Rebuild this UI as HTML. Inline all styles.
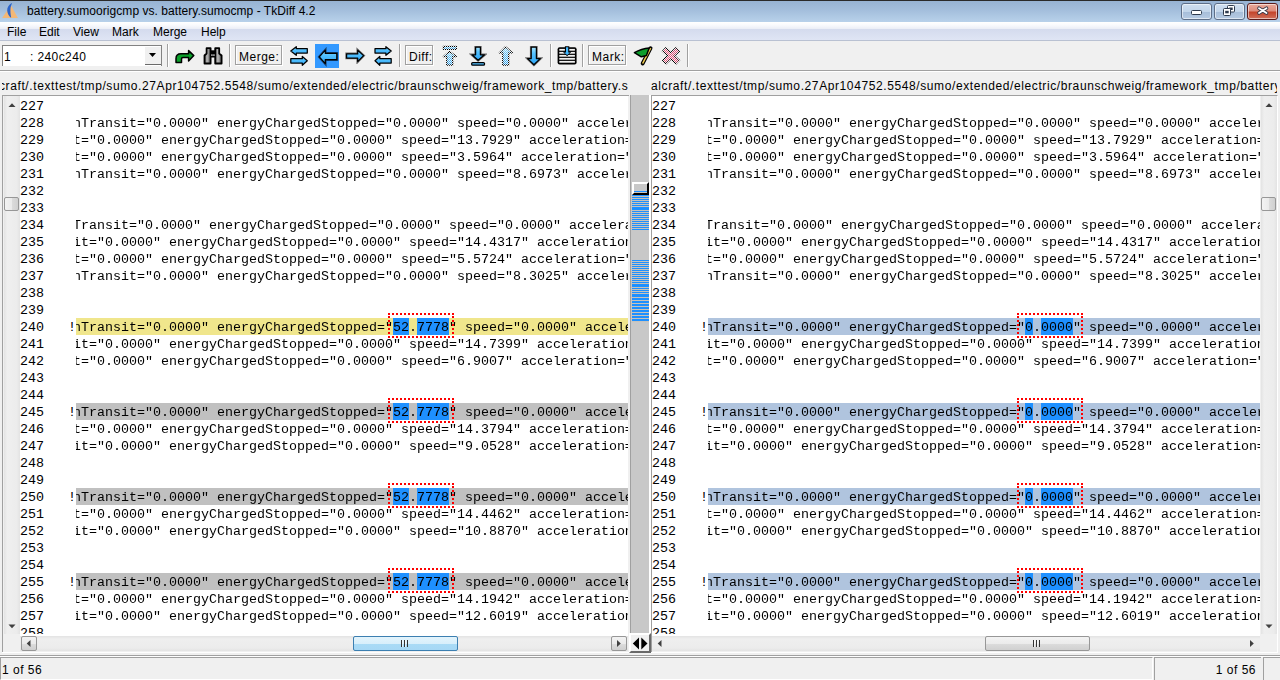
<!DOCTYPE html><html><head><meta charset="utf-8"><style>*{margin:0;padding:0;box-sizing:border-box}
html,body{width:1280px;height:680px;overflow:hidden}
body{position:relative;background:#f0f0f0;font-family:"Liberation Sans",sans-serif;font-size:12px;color:#000}
.a{position:absolute}
#title{left:0;top:0;width:1280px;height:22px;background:linear-gradient(#97b3d3,#a2bddb 40%,#b8d1ea);border-top:1px solid #2a2a2a}
#title .tt{left:27px;top:3px;line-height:14px;white-space:pre;color:#000;letter-spacing:0.05px}
.wb{top:2px;height:16.5px;width:31px;border:1px solid #5d6e87;border-radius:3px;background:linear-gradient(#cfdff0 0,#c2d5ea 50%,#a6bdd8 51%,#b6cbe3 100%);box-shadow:inset 0 0 0 1px rgba(255,255,255,.55)}
#menu{left:0;top:22px;width:1280px;height:19px;background:linear-gradient(#ffffff 0,#f9fafd 3px,#eceff7 6.5px,#d4dbee 7px,#dfe5f4 18px);border-bottom:1px solid #b9c1d2}
#menu span{position:absolute;top:3px;line-height:14px}
#tb{left:0;top:41px;width:1280px;height:30px;background:#f0f0f0;border-bottom:1px solid #a0a0a0}
.sep{top:3px;width:2px;height:23px;border-left:1px solid #a0a0a0;border-right:1px solid #fff}
.lbl{top:4px;height:20px;border:1px solid #a0a0a0;box-shadow:inset 1px 1px 0 #fff,1px 1px 0 #fff;line-height:14px;padding:4px 0 0 3px;white-space:pre;letter-spacing:0.5px}
.path{top:79px;line-height:14px;white-space:pre;overflow:hidden;height:16px;font-size:12px;letter-spacing:0.6px}
.pane{top:95px;height:557px;border-top:1px solid #a0a0a0;border-left:1px solid #a0a0a0}
.ta{top:96px;width:608px;height:540px;background:#fff;overflow:hidden}
.clip{position:absolute;left:0;top:0;width:608px;height:538px;overflow:hidden}
.row .t{font-family:"Liberation Mono",monospace;font-size:13.333px;line-height:17px;white-space:pre}
.numw{position:absolute;left:0;top:1px;width:56px;height:537px}
.row .n{left:0}
.row .cb{left:48px}
.txt{position:absolute;left:56px;top:1px;width:552px;height:537px;overflow:hidden}
.row{position:absolute;left:0;width:552px;height:17px}
.txt .row .t{left:-3px}
.row .t{position:absolute;top:1px}
.txt .row .t{transform:scaleY(.9);transform-origin:0 12.5px}
.hl-y{background:#f0e68c}.hl-g{background:#c0c0c0}.hl-b{background:#b0c4de}
.row i{position:absolute;top:0;height:17px;background:#1e90ff}
.rbox{position:absolute;height:25px;border:2px dotted #f00}
.vs{width:16px;height:538px;top:96px;background:linear-gradient(90deg,#e3e3e3,#efefef 20%,#ececec 80%,#e3e3e3)}
.hs{height:15px;top:636px;width:608px;background:linear-gradient(#e3e3e3,#efefef 20%,#ececec 80%,#e3e3e3)}
.thumbv{width:15px;height:14px;border:1px solid #979797;border-radius:2px;background:linear-gradient(90deg,#f3f3f3 0,#ebebeb 50%,#dcdcdc 51%,#d0d0d0 100%)}
.thumbh{height:15px;border:1px solid #979797;border-radius:2px;background:linear-gradient(#f3f3f3 0,#ebebeb 50%,#dcdcdc 51%,#d0d0d0 100%)}
.thumbh.hot{border-color:#3c7fb1;background:linear-gradient(#e3f4fc 0,#d8effb 50%,#a9dbf6 51%,#a6d8f5 100%)}
.btnh{width:16px;height:15px;border:1px solid #979797;border-radius:2px;background:linear-gradient(#f2f2f2 0,#ebebeb 50%,#dddddd 51%,#cfcfcf 100%)}
#map{left:630px;top:95px;width:21px;height:538px;border-left:1px solid #a0a0a0;border-right:2px solid #fff;background:#c8c8c8}
#status{left:0;top:657px;width:1280px;height:23px}
.grip{width:7px;height:7px;background:repeating-linear-gradient(90deg,#333 0,#333 1px,rgba(255,255,255,.6) 1px,rgba(255,255,255,.6) 2px,transparent 2px,transparent 3px)}
</style></head><body><div id="title" class="a">
 <svg class="a" style="left:0;top:0" width="22" height="22" viewBox="0 0 22 22"><path d="M2.1,16.9 L10.8,4 L17.9,16.9 Z" fill="#f3b877"/><path d="M11.6,2 C9,3.5 7,6.5 7.2,9.5 C7.3,12 8.5,14.5 10.6,16.6 L11.2,16.6 C10.4,13 10.2,9 10.6,6.5 C10.9,4.8 11.5,3.5 11.9,2.6 Z" fill="#2b63c9"/></svg>
 <div class="a tt">battery.sumoorigcmp vs. battery.sumocmp - TkDiff 4.2</div>
 <div class="a wb" style="left:1181px"></div>
 <div class="a wb" style="left:1214px"></div>
 <div class="a wb" style="left:1247px;border-color:#5a1b1b;background:linear-gradient(#e9a99a 0,#dd8d7d 45%,#c4452c 55%,#d0715c 100%)"></div>
</div>
<div id="menu" class="a"><span style="left:7px">File</span><span style="left:39px">Edit</span><span style="left:73px">View</span><span style="left:112px">Mark</span><span style="left:153px">Merge</span><span style="left:201px">Help</span></div>
<div id="tb" class="a">
 <div class="a" style="left:2px;top:4px;width:160px;height:21px;background:#fff;border-top:1px solid #828282;border-left:1px solid #828282;border-right:1px solid #828282"></div>
 <div class="a" style="left:145px;top:6px;width:16px;height:18px;background:#f0f0f0;border-bottom:1px solid #6a6a6a"></div>
 <div class="a" style="left:4px;top:9px;line-height:14px;white-space:pre">1</div><div class="a" style="left:30px;top:9px;line-height:14px;white-space:pre;letter-spacing:0.4px">: 240c240</div>
 <div class="a sep" style="left:167px"></div>
 <div class="a sep" style="left:229px"></div>
 <div class="a lbl" style="left:235px;width:47px">Merge:</div>
 <div class="a" style="left:315px;top:3px;width:24px;height:24px;background:#3399ff"></div>
 <div class="a sep" style="left:399px"></div>
 <div class="a lbl" style="left:405px;width:28px">Diff:</div>
 <div class="a sep" style="left:550px"></div>
 <div class="a sep" style="left:582px"></div>
 <div class="a lbl" style="left:588px;width:38px">Mark:</div>
 <div class="a sep" style="left:687px"></div>
</div>
<div class="a" style="left:0;top:71px;width:1280px;height:1px;background:#fff"></div>
<div class="a path" style="left:2px;width:626px"><span style="position:absolute;left:-3px">craft/.texttest/tmp/sumo.27Apr104752.5548/sumo/extended/electric/braunschweig/framework_tmp/battery.sumoorigcmp</span></div>
<div class="a path" style="left:651px;width:626px"><span style="position:absolute;left:0">alcraft/.texttest/tmp/sumo.27Apr104752.5548/sumo/extended/electric/braunschweig/framework_tmp/battery.sumocmp</span></div>

<div class="a pane" style="left:2px;width:627px"></div>
<div class="a vs" style="left:4px"></div>
<div class="a thumbv" style="left:4px;top:197px"></div>
<div class="a ta" style="left:20px"><div class="clip"><div class="numw"><div class="row" style="top:0px"><span class="t n">227</span></div><div class="row" style="top:17px"><span class="t n">228</span></div><div class="row" style="top:34px"><span class="t n">229</span></div><div class="row" style="top:51px"><span class="t n">230</span></div><div class="row" style="top:68px"><span class="t n">231</span></div><div class="row" style="top:85px"><span class="t n">232</span></div><div class="row" style="top:102px"><span class="t n">233</span></div><div class="row" style="top:119px"><span class="t n">234</span></div><div class="row" style="top:136px"><span class="t n">235</span></div><div class="row" style="top:153px"><span class="t n">236</span></div><div class="row" style="top:170px"><span class="t n">237</span></div><div class="row" style="top:187px"><span class="t n">238</span></div><div class="row" style="top:204px"><span class="t n">239</span></div><div class="row" style="top:221px"><span class="t n">240</span><span class="t cb">!</span></div><div class="row" style="top:238px"><span class="t n">241</span></div><div class="row" style="top:255px"><span class="t n">242</span></div><div class="row" style="top:272px"><span class="t n">243</span></div><div class="row" style="top:289px"><span class="t n">244</span></div><div class="row" style="top:306px"><span class="t n">245</span><span class="t cb">!</span></div><div class="row" style="top:323px"><span class="t n">246</span></div><div class="row" style="top:340px"><span class="t n">247</span></div><div class="row" style="top:357px"><span class="t n">248</span></div><div class="row" style="top:374px"><span class="t n">249</span></div><div class="row" style="top:391px"><span class="t n">250</span><span class="t cb">!</span></div><div class="row" style="top:408px"><span class="t n">251</span></div><div class="row" style="top:425px"><span class="t n">252</span></div><div class="row" style="top:442px"><span class="t n">253</span></div><div class="row" style="top:459px"><span class="t n">254</span></div><div class="row" style="top:476px"><span class="t n">255</span><span class="t cb">!</span></div><div class="row" style="top:493px"><span class="t n">256</span></div><div class="row" style="top:510px"><span class="t n">257</span></div><div class="row" style="top:527px"><span class="t n">258</span></div></div><div class="txt"><div class="row" style="top:17px"><span class="t">nTransit=&quot;0.0000&quot; energyChargedStopped=&quot;0.0000&quot; speed=&quot;0.0000&quot; acceleration=&quot;0.0000&quot;</span></div><div class="row" style="top:34px"><span class="t">t=&quot;0.0000&quot; energyChargedStopped=&quot;0.0000&quot; speed=&quot;13.7929&quot; acceleration=&quot;0.0000&quot;</span></div><div class="row" style="top:51px"><span class="t">t=&quot;0.0000&quot; energyChargedStopped=&quot;0.0000&quot; speed=&quot;3.5964&quot; acceleration=&quot;0.0000&quot;</span></div><div class="row" style="top:68px"><span class="t">nTransit=&quot;0.0000&quot; energyChargedStopped=&quot;0.0000&quot; speed=&quot;8.6973&quot; acceleration=&quot;0.0000&quot;</span></div><div class="row" style="top:119px"><span class="t">Transit=&quot;0.0000&quot; energyChargedStopped=&quot;0.0000&quot; speed=&quot;0.0000&quot; acceleration=&quot;0.0000&quot;</span></div><div class="row" style="top:136px"><span class="t">it=&quot;0.0000&quot; energyChargedStopped=&quot;0.0000&quot; speed=&quot;14.4317&quot; acceleration=&quot;0.0000&quot;</span></div><div class="row" style="top:153px"><span class="t">t=&quot;0.0000&quot; energyChargedStopped=&quot;0.0000&quot; speed=&quot;5.5724&quot; acceleration=&quot;0.0000&quot;</span></div><div class="row" style="top:170px"><span class="t">nTransit=&quot;0.0000&quot; energyChargedStopped=&quot;0.0000&quot; speed=&quot;8.3025&quot; acceleration=&quot;0.0000&quot;</span></div><div class="row hl-y" style="top:221px"><i style="left:317px;width:16px"></i><i style="left:341px;width:32px"></i><span class="t">nTransit="0.0000" energyChargedStopped="52.7778" speed="0.0000" acceleration="0.0000"</span></div><div class="rbox" style="top:216px;left:312px;width:66px"></div><div class="row" style="top:238px"><span class="t">it=&quot;0.0000&quot; energyChargedStopped=&quot;0.0000&quot; speed=&quot;14.7399&quot; acceleration=&quot;0.0000&quot;</span></div><div class="row" style="top:255px"><span class="t">t=&quot;0.0000&quot; energyChargedStopped=&quot;0.0000&quot; speed=&quot;6.9007&quot; acceleration=&quot;0.0000&quot;</span></div><div class="row hl-g" style="top:306px"><i style="left:317px;width:16px"></i><i style="left:341px;width:32px"></i><span class="t">nTransit="0.0000" energyChargedStopped="52.7778" speed="0.0000" acceleration="0.0000"</span></div><div class="rbox" style="top:301px;left:312px;width:66px"></div><div class="row" style="top:323px"><span class="t">t=&quot;0.0000&quot; energyChargedStopped=&quot;0.0000&quot; speed=&quot;14.3794&quot; acceleration=&quot;0.0000&quot;</span></div><div class="row" style="top:340px"><span class="t">it=&quot;0.0000&quot; energyChargedStopped=&quot;0.0000&quot; speed=&quot;9.0528&quot; acceleration=&quot;0.0000&quot;</span></div><div class="row hl-g" style="top:391px"><i style="left:317px;width:16px"></i><i style="left:341px;width:32px"></i><span class="t">nTransit="0.0000" energyChargedStopped="52.7778" speed="0.0000" acceleration="0.0000"</span></div><div class="rbox" style="top:386px;left:312px;width:66px"></div><div class="row" style="top:408px"><span class="t">t=&quot;0.0000&quot; energyChargedStopped=&quot;0.0000&quot; speed=&quot;14.4462&quot; acceleration=&quot;0.0000&quot;</span></div><div class="row" style="top:425px"><span class="t">it=&quot;0.0000&quot; energyChargedStopped=&quot;0.0000&quot; speed=&quot;10.8870&quot; acceleration=&quot;0.0000&quot;</span></div><div class="row hl-g" style="top:476px"><i style="left:317px;width:16px"></i><i style="left:341px;width:32px"></i><span class="t">nTransit="0.0000" energyChargedStopped="52.7778" speed="0.0000" acceleration="0.0000"</span></div><div class="rbox" style="top:471px;left:312px;width:66px"></div><div class="row" style="top:493px"><span class="t">t=&quot;0.0000&quot; energyChargedStopped=&quot;0.0000&quot; speed=&quot;14.1942&quot; acceleration=&quot;0.0000&quot;</span></div><div class="row" style="top:510px"><span class="t">it=&quot;0.0000&quot; energyChargedStopped=&quot;0.0000&quot; speed=&quot;12.6019&quot; acceleration=&quot;0.0000&quot;</span></div></div></div></div>
<div class="a hs" style="left:20px"></div>
<div class="a btnh" style="left:21px;top:636px"></div>
<div class="a btnh" style="left:611px;top:636px"></div>
<div class="a thumbh hot" style="left:353px;top:636px;width:105px"></div>
<div class="a grip" style="left:401px;top:640px"></div>

<div id="map" class="a"></div>
<div class="a" style="left:632px;top:191px;width:17px;height:39px;background:repeating-linear-gradient(#1e90ff 0,#1e90ff 1px,#c9c3ba 1px,#c9c3ba 2px)"></div>
<div class="a" style="left:632px;top:207px;width:17px;height:2px;background:#1e90ff"></div>
<div class="a" style="left:632px;top:260px;width:17px;height:35px;background:repeating-linear-gradient(#1e90ff 0,#1e90ff 1px,#c9c3ba 1px,#c9c3ba 2px)"></div>
<div class="a" style="left:632px;top:284px;width:17px;height:2px;background:#1e90ff"></div>
<div class="a" style="left:632px;top:295px;width:17px;height:27px;background:repeating-linear-gradient(#1e90ff 0,#1e90ff 2px,#c9c3ba 2px,#c9c3ba 3px)"></div>
<div class="a" style="left:632px;top:182px;width:17px;height:13px;border-top:2px solid #fff;border-left:2px solid #fff;border-right:2px solid #000;border-bottom:2px solid #000"></div>

<div class="a pane" style="left:651px;width:627px;border-right:1px solid #fff"></div>
<div class="a ta" style="left:652px"><div class="clip"><div class="numw"><div class="row" style="top:0px"><span class="t n">227</span></div><div class="row" style="top:17px"><span class="t n">228</span></div><div class="row" style="top:34px"><span class="t n">229</span></div><div class="row" style="top:51px"><span class="t n">230</span></div><div class="row" style="top:68px"><span class="t n">231</span></div><div class="row" style="top:85px"><span class="t n">232</span></div><div class="row" style="top:102px"><span class="t n">233</span></div><div class="row" style="top:119px"><span class="t n">234</span></div><div class="row" style="top:136px"><span class="t n">235</span></div><div class="row" style="top:153px"><span class="t n">236</span></div><div class="row" style="top:170px"><span class="t n">237</span></div><div class="row" style="top:187px"><span class="t n">238</span></div><div class="row" style="top:204px"><span class="t n">239</span></div><div class="row" style="top:221px"><span class="t n">240</span><span class="t cb">!</span></div><div class="row" style="top:238px"><span class="t n">241</span></div><div class="row" style="top:255px"><span class="t n">242</span></div><div class="row" style="top:272px"><span class="t n">243</span></div><div class="row" style="top:289px"><span class="t n">244</span></div><div class="row" style="top:306px"><span class="t n">245</span><span class="t cb">!</span></div><div class="row" style="top:323px"><span class="t n">246</span></div><div class="row" style="top:340px"><span class="t n">247</span></div><div class="row" style="top:357px"><span class="t n">248</span></div><div class="row" style="top:374px"><span class="t n">249</span></div><div class="row" style="top:391px"><span class="t n">250</span><span class="t cb">!</span></div><div class="row" style="top:408px"><span class="t n">251</span></div><div class="row" style="top:425px"><span class="t n">252</span></div><div class="row" style="top:442px"><span class="t n">253</span></div><div class="row" style="top:459px"><span class="t n">254</span></div><div class="row" style="top:476px"><span class="t n">255</span><span class="t cb">!</span></div><div class="row" style="top:493px"><span class="t n">256</span></div><div class="row" style="top:510px"><span class="t n">257</span></div><div class="row" style="top:527px"><span class="t n">258</span></div></div><div class="txt"><div class="row" style="top:17px"><span class="t">nTransit=&quot;0.0000&quot; energyChargedStopped=&quot;0.0000&quot; speed=&quot;0.0000&quot; acceleration=&quot;0.0000&quot;</span></div><div class="row" style="top:34px"><span class="t">t=&quot;0.0000&quot; energyChargedStopped=&quot;0.0000&quot; speed=&quot;13.7929&quot; acceleration=&quot;0.0000&quot;</span></div><div class="row" style="top:51px"><span class="t">t=&quot;0.0000&quot; energyChargedStopped=&quot;0.0000&quot; speed=&quot;3.5964&quot; acceleration=&quot;0.0000&quot;</span></div><div class="row" style="top:68px"><span class="t">nTransit=&quot;0.0000&quot; energyChargedStopped=&quot;0.0000&quot; speed=&quot;8.6973&quot; acceleration=&quot;0.0000&quot;</span></div><div class="row" style="top:119px"><span class="t">Transit=&quot;0.0000&quot; energyChargedStopped=&quot;0.0000&quot; speed=&quot;0.0000&quot; acceleration=&quot;0.0000&quot;</span></div><div class="row" style="top:136px"><span class="t">it=&quot;0.0000&quot; energyChargedStopped=&quot;0.0000&quot; speed=&quot;14.4317&quot; acceleration=&quot;0.0000&quot;</span></div><div class="row" style="top:153px"><span class="t">t=&quot;0.0000&quot; energyChargedStopped=&quot;0.0000&quot; speed=&quot;5.5724&quot; acceleration=&quot;0.0000&quot;</span></div><div class="row" style="top:170px"><span class="t">nTransit=&quot;0.0000&quot; energyChargedStopped=&quot;0.0000&quot; speed=&quot;8.3025&quot; acceleration=&quot;0.0000&quot;</span></div><div class="row hl-b" style="top:221px"><i style="left:317px;width:8px"></i><i style="left:333px;width:32px"></i><span class="t">nTransit="0.0000" energyChargedStopped="0.0000" speed="0.0000" acceleration="0.0000"</span></div><div class="rbox" style="top:216px;left:309px;width:66px"></div><div class="row" style="top:238px"><span class="t">it=&quot;0.0000&quot; energyChargedStopped=&quot;0.0000&quot; speed=&quot;14.7399&quot; acceleration=&quot;0.0000&quot;</span></div><div class="row" style="top:255px"><span class="t">t=&quot;0.0000&quot; energyChargedStopped=&quot;0.0000&quot; speed=&quot;6.9007&quot; acceleration=&quot;0.0000&quot;</span></div><div class="row hl-b" style="top:306px"><i style="left:317px;width:8px"></i><i style="left:333px;width:32px"></i><span class="t">nTransit="0.0000" energyChargedStopped="0.0000" speed="0.0000" acceleration="0.0000"</span></div><div class="rbox" style="top:301px;left:309px;width:66px"></div><div class="row" style="top:323px"><span class="t">t=&quot;0.0000&quot; energyChargedStopped=&quot;0.0000&quot; speed=&quot;14.3794&quot; acceleration=&quot;0.0000&quot;</span></div><div class="row" style="top:340px"><span class="t">it=&quot;0.0000&quot; energyChargedStopped=&quot;0.0000&quot; speed=&quot;9.0528&quot; acceleration=&quot;0.0000&quot;</span></div><div class="row hl-b" style="top:391px"><i style="left:317px;width:8px"></i><i style="left:333px;width:32px"></i><span class="t">nTransit="0.0000" energyChargedStopped="0.0000" speed="0.0000" acceleration="0.0000"</span></div><div class="rbox" style="top:386px;left:309px;width:66px"></div><div class="row" style="top:408px"><span class="t">t=&quot;0.0000&quot; energyChargedStopped=&quot;0.0000&quot; speed=&quot;14.4462&quot; acceleration=&quot;0.0000&quot;</span></div><div class="row" style="top:425px"><span class="t">it=&quot;0.0000&quot; energyChargedStopped=&quot;0.0000&quot; speed=&quot;10.8870&quot; acceleration=&quot;0.0000&quot;</span></div><div class="row hl-b" style="top:476px"><i style="left:317px;width:8px"></i><i style="left:333px;width:32px"></i><span class="t">nTransit="0.0000" energyChargedStopped="0.0000" speed="0.0000" acceleration="0.0000"</span></div><div class="rbox" style="top:471px;left:309px;width:66px"></div><div class="row" style="top:493px"><span class="t">t=&quot;0.0000&quot; energyChargedStopped=&quot;0.0000&quot; speed=&quot;14.1942&quot; acceleration=&quot;0.0000&quot;</span></div><div class="row" style="top:510px"><span class="t">it=&quot;0.0000&quot; energyChargedStopped=&quot;0.0000&quot; speed=&quot;12.6019&quot; acceleration=&quot;0.0000&quot;</span></div></div></div></div>
<div class="a vs" style="left:1261px"></div>
<div class="a thumbv" style="left:1261px;top:197px"></div>
<div class="a hs" style="left:652px"></div>
<div class="a thumbh" style="left:985px;top:636px;width:105px"></div>
<div class="a grip" style="left:1033px;top:640px"></div>

<div class="a" style="left:2px;top:652px;width:1276px;height:1px;background:#fff"></div>
<div class="a" style="left:0;top:655px;width:1280px;height:1px;background:#a0a0a0"></div>
<div class="a" style="left:0;top:656px;width:1280px;height:1px;background:#fff"></div>
<div class="a" style="left:0;top:657px;width:1153px;height:23px;border-top:1px solid #a0a0a0;border-left:1px solid #a0a0a0;border-right:1px solid #fff;border-bottom:1px solid #fff"></div>
<div class="a" style="left:2px;top:663px;line-height:14px;letter-spacing:0.5px">1 of 56</div>
<div class="a" style="left:1154px;top:657px;width:107px;height:23px;border-top:1px solid #a0a0a0;border-left:1px solid #a0a0a0"></div>
<div class="a" style="left:1154px;top:663px;width:102px;line-height:14px;text-align:right;letter-spacing:0.5px">1 of 56</div>
<div class="a" style="left:1263px;top:657px;width:17px;height:23px;border-top:1px solid #a0a0a0;border-left:1px solid #a0a0a0"></div>
<div class="a" style="left:629px;top:633px;width:22px;height:20px;border-top:2px solid #fff;border-left:2px solid #fff;border-right:2px solid #696969;border-bottom:2px solid #696969;background:#f0f0f0"></div>
<svg class="a" style="left:0;top:0" width="1280" height="680" viewBox="0 0 1280 680"><defs>
<linearGradient id="gb" x1="0" y1="0" x2="0" y2="1"><stop offset="0" stop-color="#a8e6ff"/><stop offset=".35" stop-color="#55c2ff"/><stop offset="1" stop-color="#2aa4f6"/></linearGradient>
<linearGradient id="gg" x1="0" y1="0" x2="1" y2="0"><stop offset="0" stop-color="#444"/><stop offset=".4" stop-color="#bdbdbd"/><stop offset="1" stop-color="#555"/></linearGradient>
<filter id="blur" x="-20%" y="-20%" width="140%" height="140%"><feGaussianBlur stdDeviation="0.7"/></filter>
<pattern id="chk" width="2" height="2" patternUnits="userSpaceOnUse"><rect width="1" height="1" fill="#fff"/><rect x="1" y="1" width="1" height="1" fill="#fff"/></pattern>
<mask id="mchk" maskUnits="userSpaceOnUse" x="0" y="0" width="1280" height="680"><rect width="1280" height="680" fill="url(#chk)"/></mask>
</defs><path d="M176,62.5 L176,58.5 C176,55.3 178,53.7 181,53.7 L188.6,53.7 L188.6,50.6 L193.8,55.6 L188.6,61 L188.6,57.5 L183,57.5 C182,57.5 181.5,58.2 181.5,59 L181.5,62.5 Z" fill="#0aa02a" stroke="#000" stroke-width="1.5" stroke-linejoin="round"/><g stroke="#000" stroke-width="1.8" fill="url(#gg)" stroke-linejoin="round"><path d="M206.6,48.2 L210.6,48.2 L210.6,63.5 L204.5,63.5 L204.5,55.5 L206.6,53.5 Z"/><path d="M215.2,48.2 L219.2,48.2 L219.2,53.5 L221.6,55.5 L221.6,63.5 L215.2,63.5 Z"/></g><rect x="210.6" y="50.3" width="4.6" height="7.2" fill="#000"/><rect x="211.4" y="54.3" width="1.1" height="1.6" fill="#fff"/><rect x="213.4" y="54.3" width="1.1" height="1.6" fill="#fff"/><path d="M290.8,51 L296.3,46.7 L296.3,48.7 L307.3,48.7 L307.3,53.1 L296.3,53.1 L296.3,55.3 Z" fill="url(#gb)" stroke="#000" stroke-width="1.25" stroke-linejoin="round"/><path d="M307.3,60.8 L302.3,56.5 L302.3,58.7 L290.8,58.7 L290.8,63.1 L302.3,63.1 L302.3,65.3 Z" fill="url(#gb)" stroke="#000" stroke-width="1.25" stroke-linejoin="round"/><path d="M319.3,56.9 L325.3,50.2 L325.3,53.4 L336.8,53.4 L336.8,59.6 L325.3,59.6 L325.3,63.6 Z" fill="none" stroke="#000" stroke-opacity=".55" stroke-width="2.6" stroke-linejoin="miter" filter="url(#blur)"/><path d="M319.3,56.9 L325.3,50.2 L325.3,53.4 L336.8,53.4 L336.8,59.6 L325.3,59.6 L325.3,63.6 Z" fill="url(#gb)" stroke="#000" stroke-width="1.25" stroke-linejoin="round"/><path d="M363.6,55.6 L357.7,50.2 L357.7,53.9 L346.6,53.9 L346.6,58 L357.7,58 L357.7,61.6 Z" fill="none" stroke="#000" stroke-opacity=".55" stroke-width="2.6" stroke-linejoin="miter" filter="url(#blur)"/><path d="M363.6,55.6 L357.7,50.2 L357.7,53.9 L346.6,53.9 L346.6,58 L357.7,58 L357.7,61.6 Z" fill="url(#gb)" stroke="#000" stroke-width="1.25" stroke-linejoin="round"/><path d="M391.2,51 L385.9,46.7 L385.9,48.7 L375,48.7 L375,53.1 L385.9,53.1 L385.9,55.3 Z" fill="url(#gb)" stroke="#000" stroke-width="1.25" stroke-linejoin="round"/><path d="M375,60.8 L379.8,56.5 L379.8,58.7 L391.2,58.7 L391.2,63.1 L379.8,63.1 L379.8,65.3 Z" fill="url(#gb)" stroke="#000" stroke-width="1.25" stroke-linejoin="round"/><g mask="url(#mchk)"><path d="M449.5,51.2 L456.3,56.6 L452.7,56.6 L452.7,65 L446.7,65 L446.7,56.6 L443.3,56.6 Z" fill="url(#gb)" stroke="#000" stroke-width="1.25" stroke-linejoin="round"/><rect x="443.4" y="46.4" width="13" height="3" fill="url(#gb)" stroke="#000" stroke-width="1.2"/></g><path d="M478.1,60.3 L484.5,54.8 L480.4,54.8 L480.4,47.2 L475.6,47.2 L475.6,54.8 L472,54.8 Z" fill="none" stroke="#000" stroke-opacity=".55" stroke-width="2.6" stroke-linejoin="miter" filter="url(#blur)"/><path d="M478.1,60.3 L484.5,54.8 L480.4,54.8 L480.4,47.2 L475.6,47.2 L475.6,54.8 L472,54.8 Z" fill="url(#gb)" stroke="#000" stroke-width="1.25" stroke-linejoin="round"/><rect x="471.7" y="62.6" width="12.8" height="2.6" rx="1" fill="url(#gb)" stroke="#000" stroke-width="1.3"/><g mask="url(#mchk)"><path d="M505.5,46.7 L512.5,52.9 L508.7,52.9 L508.7,65 L502.7,65 L502.7,52.9 L499.3,52.9 Z" fill="url(#gb)" stroke="#000" stroke-width="1.25" stroke-linejoin="round"/></g><path d="M533.9,64.8 L540.3,58.6 L536.4,58.6 L536.4,47.2 L531.2,47.2 L531.2,58.6 L527.6,58.6 Z" fill="none" stroke="#000" stroke-opacity=".55" stroke-width="2.6" stroke-linejoin="miter" filter="url(#blur)"/><path d="M533.9,64.8 L540.3,58.6 L536.4,58.6 L536.4,47.2 L531.2,47.2 L531.2,58.6 L527.6,58.6 Z" fill="url(#gb)" stroke="#000" stroke-width="1.25" stroke-linejoin="round"/><rect x="557.6" y="47.3" width="19" height="17.3" rx="2" fill="#000"/><rect x="559.3" y="48.9" width="15.6" height="1.8" fill="#f2f2f2"/><rect x="559.3" y="51.9" width="15.6" height="1.8" fill="#f2f2f2"/><rect x="559.3" y="54.9" width="15.6" height="1.8" fill="#f2f2f2"/><rect x="559.3" y="57.9" width="15.6" height="1.8" fill="#f2f2f2"/><rect x="559.3" y="60.9" width="15.6" height="1.8" fill="#f2f2f2"/><path d="M564.9,46.3 L569.3,46.3 L569.3,51.6 L571.6,51.6 L567.1,56.3 L562.6,51.6 L564.9,51.6 Z" fill="#000"/><path d="M566,47.2 L568.2,47.2 L568.2,52.4 L570.1,52.4 L567.1,55 L564.1,52.4 L566,52.4 Z" fill="#42b8ff"/><line x1="650.6" y1="48.2" x2="642.6" y2="63.5" stroke="#000" stroke-width="3.8" stroke-linecap="round"/><line x1="650.6" y1="48.2" x2="642.6" y2="63.5" stroke="#f0cc50" stroke-width="1.6"/><path d="M649.2,48 C645,48.3 638.5,50.3 634.4,52.7 L641.3,56.8 L646.4,55.6 Z" fill="#0c9e2c" stroke="#000" stroke-width="1.5" stroke-linejoin="round"/><g mask="url(#mchk)"><path d="M663.8,49 L678.2,62.6 M678.2,49 L663.8,62.6" stroke="#000" stroke-width="6.2" stroke-linecap="butt"/><path d="M664.6,49.8 L677.4,61.8 M677.4,49.8 L664.6,61.8" stroke="#e8527a" stroke-width="3.4" stroke-linecap="butt"/></g><rect x="1191.5" y="10.5" width="10" height="4" rx="1" fill="#fff" stroke="#2d3a4d" stroke-width="1"/><rect x="1227.5" y="5.5" width="7" height="6.5" rx="1" fill="#fff" stroke="#2d3a4d" stroke-width="1"/><rect x="1229.2" y="7.5" width="3.5" height="2.5" fill="#2d3a4d"/><rect x="1223.5" y="8.5" width="7" height="7" rx="1" fill="#fff" stroke="#2d3a4d" stroke-width="1"/><rect x="1225.2" y="10.8" width="3.5" height="2.5" fill="#2d3a4d"/><path d="M1259,8.2 L1266.5,13 M1266.5,8.2 L1259,13" stroke="#3a3a4a" stroke-width="3.6" stroke-linecap="round"/><path d="M1259,8.2 L1266.5,13 M1266.5,8.2 L1259,13" stroke="#fff" stroke-width="1.8" stroke-linecap="round"/><path d="M149,53 L156,53 L152.5,57 Z" fill="#000"/><path d="M8.5,107 L15.5,107 L12,103.2 Z" fill="#404040"/><path d="M8.5,624.5 L15.5,624.5 L12,628.3 Z" fill="#404040"/><path d="M1265.5,107 L1272.5,107 L1269,103.2 Z" fill="#404040"/><path d="M1265.5,624.5 L1272.5,624.5 L1269,628.3 Z" fill="#404040"/><path d="M30.5,640.0 L30.5,647.0 L26.7,643.5 Z" fill="#404040"/><path d="M617,640.0 L617,647.0 L620.8,643.5 Z" fill="#404040"/><path d="M661.5,640.0 L661.5,647.0 L657.7,643.5 Z" fill="#404040"/><path d="M1250,640.0 L1250,647.0 L1253.8,643.5 Z" fill="#404040"/><path d="M632.8,643.5 L639,637.5 L639,649.5 Z M647.5,643.5 L641.3,637.5 L641.3,649.5 Z" fill="#000"/></svg>
</body></html>
